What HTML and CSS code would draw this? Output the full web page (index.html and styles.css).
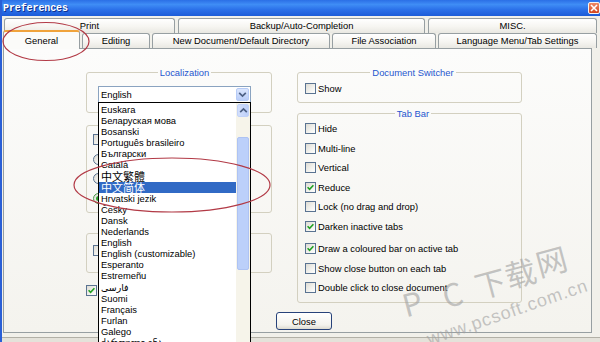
FILE: index.html
```html
<!DOCTYPE html>
<html>
<head>
<meta charset="utf-8">
<title>Preferences</title>
<link rel="stylesheet" href="styles.css">
</head>
<body>
<div class="window">
  <div class="titlebar">
    <span class="title">Preferences</span>
    <span class="close-btn"><svg width="8" height="8" viewBox="0 0 8 8"><path d="M1 1L7 7M7 1L1 7" stroke="#fff" stroke-width="1.6" fill="none"/></svg></span>
  </div>

  <div class="tabs">
    <div class="tab-row back">
      <div class="tab w-print">Print</div>
      <div class="tab w-backup">Backup/Auto-Completion</div>
      <div class="tab w-misc">MISC.</div>
    </div>
    <div class="tab-row front">
      <div class="tab active w-general">General</div>
      <div class="tab w-editing">Editing</div>
      <div class="tab w-newdoc">New Document/Default Directory</div>
      <div class="tab w-file">File Association</div>
      <div class="tab w-lang">Language Menu/Tab Settings</div>
    </div>
  </div>

  <div class="page">
    <div class="content">
      <div class="columns">
        <div class="col col-left">
          <fieldset class="group g-local">
            <legend>Localization</legend>
            <div class="combo">
              <span class="combo-value">English</span>
              <span class="combo-btn"><svg width="9" height="7" viewBox="0 0 9 7"><path d="M1.2 1.8L4.5 5L7.8 1.8" stroke="#4d6185" stroke-width="1.7" fill="none"/></svg></span>
              <div class="dropdown">
                <div class="list">
                  <div class="item">Euskara</div>
                  <div class="item">Беларуская мова</div>
                  <div class="item">Bosanski</div>
                  <div class="item">Português brasileiro</div>
                  <div class="item">Български</div>
                  <div class="item">Català</div>
                  <div class="item cjk">中文繁體</div>
                  <div class="item cjk selected">中文简体</div>
                  <div class="item">Hrvatski jezik</div>
                  <div class="item">Česky</div>
                  <div class="item">Dansk</div>
                  <div class="item">Nederlands</div>
                  <div class="item">English</div>
                  <div class="item">English (customizable)</div>
                  <div class="item">Esperanto</div>
                  <div class="item">Estremeñu</div>
                  <div class="item">فارسی</div>
                  <div class="item">Suomi</div>
                  <div class="item">Français</div>
                  <div class="item">Furlan</div>
                  <div class="item">Galego</div>
                  <div class="item">ქართული ენა</div>
                </div>
                <div class="scrollbar">
                  <div class="sb-btn"><svg width="9" height="7" viewBox="0 0 9 7"><path d="M1.2 5.2L4.5 2L7.8 5.2" stroke="#4d6185" stroke-width="1.7" fill="none"/></svg></div>
                  <div class="sb-thumb"></div>
                </div>
              </div>
            </div>
          </fieldset>

          <div class="group g-opts">
            <div class="opt"><span class="cb"></span></div>
            <div class="opt"><span class="rb"></span></div>
            <div class="opt"><span class="rb"></span></div>
            <div class="opt"><span class="rb on"><span class="dot"></span></span></div>
          </div>

          <div class="group g-opts2">
            <div class="opt"><span class="cb"></span></div>
          </div>

          <div class="opt single">
            <span class="cb"><svg width="9" height="9" viewBox="0 0 9 9"><path d="M1.6 4.3L3.6 6.3L7.4 2.3" stroke="#21a121" stroke-width="1.6" fill="none"/></svg></span>
          </div>
        </div>

        <div class="col col-right">
          <fieldset class="group g-doc">
            <legend>Document Switcher</legend>
            <div class="opt"><span class="cb"></span><span>Show</span></div>
          </fieldset>

          <fieldset class="group g-tab">
            <legend>Tab Bar</legend>
            <div class="opt"><span class="cb"></span><span>Hide</span></div>
            <div class="opt"><span class="cb"></span><span>Multi-line</span></div>
            <div class="opt"><span class="cb"></span><span>Vertical</span></div>
            <div class="opt"><span class="cb"><svg width="9" height="9" viewBox="0 0 9 9"><path d="M1.6 4.3L3.6 6.3L7.4 2.3" stroke="#21a121" stroke-width="1.6" fill="none"/></svg></span><span>Reduce</span></div>
            <div class="opt"><span class="cb"></span><span>Lock (no drag and drop)</span></div>
            <div class="opt"><span class="cb"><svg width="9" height="9" viewBox="0 0 9 9"><path d="M1.6 4.3L3.6 6.3L7.4 2.3" stroke="#21a121" stroke-width="1.6" fill="none"/></svg></span><span>Darken inactive tabs</span></div>
            <div class="opt spaced"><span class="cb"><svg width="9" height="9" viewBox="0 0 9 9"><path d="M1.6 4.3L3.6 6.3L7.4 2.3" stroke="#21a121" stroke-width="1.6" fill="none"/></svg></span><span>Draw a coloured bar on active tab</span></div>
            <div class="opt"><span class="cb"></span><span>Show close button on each tab</span></div>
            <div class="opt"><span class="cb"></span><span>Double click to close document</span></div>
          </fieldset>
        </div>
      </div>
      <div class="actions"><button class="btn">Close</button></div>
    </div>
  </div>
  <div class="win-bottom"></div>

  <svg class="overlay" width="600" height="342" viewBox="0 0 600 342">
    <g class="wm-cn">
      <text x="412" y="302" transform="rotate(-15 412 302)">P</text>
      <text x="452" y="293" transform="rotate(-15 452 293)">C</text>
      <text x="490" y="282" transform="rotate(-15 490 282)">下</text>
      <text x="520" y="272" transform="rotate(-15 520 272)">载</text>
      <text x="551" y="260" transform="rotate(-15 551 260)">网</text>
    </g>
    <text class="wm-url" x="509" y="318" textLength="168" transform="rotate(-19 509 318)">www.pcsoft.com.cn</text>
    <ellipse cx="46" cy="41.5" rx="43" ry="19" class="ring"/>
    <ellipse cx="172" cy="185" rx="98" ry="27" class="ring"/>
  </svg>
</div>
</body>
</html>
```

FILE: styles.css
```css
* { box-sizing: border-box; }

html, body {
  margin: 0;
  padding: 0;
}

body {
  width: 600px;
  height: 342px;
  overflow: hidden;
  font-family: "Liberation Sans", "DejaVu Sans", "Noto Sans CJK SC", sans-serif;
  font-size: 9.4px;
  color: #000;
  background: #f1f0ea;
}

.window {
  position: relative;
  width: 600px;
  height: 342px;
  overflow: hidden;
  border-left: 2px solid #2a5fd6;
  background: #f1f0ea;
  display: flex;
  flex-direction: column;
}

/* title bar */
.titlebar {
  flex: none;
  height: 16px;
  display: flex;
  align-items: center;
  justify-content: space-between;
  padding: 0 0 0 1px;
  background: linear-gradient(#2b6fe6 0%, #3f8df5 28%, #2a6fe8 62%, #1c5cd8 100%);
}

.title {
  font-family: "Liberation Mono", "DejaVu Sans Mono", monospace;
  font-weight: bold;
  font-size: 10px;
  letter-spacing: -0.1px;
  color: #fff;
  text-shadow: 1px 1px 0 #0d2f8c;
}

.close-btn {
  width: 12px;
  height: 12px;
  border: 1px solid #f4f4f4;
  border-radius: 2px;
  background: linear-gradient(#ec8a66, #d4461f);
  display: flex;
  align-items: center;
  justify-content: center;
}

/* tabs */
.tabs {
  flex: none;
  padding-top: 2px;
}

.tab-row {
  display: flex;
  height: 15px;
}

.tab-row.back {
  padding-left: 2px;
  gap: 3px;
}

.tab-row.front {
  padding-left: 1px;
  gap: 2px;
  align-items: flex-end;
}

.tab {
  flex: none;
  height: 15px;
  border: 1px solid #979fa2;
  border-bottom: none;
  border-radius: 3px 3px 0 0;
  background: linear-gradient(#ffffff, #f6f5f1 55%, #e9e8e2);
  display: flex;
  align-items: center;
  justify-content: center;
  white-space: nowrap;
  line-height: 1;
}

.tab.active {
  height: 19px;
  margin-bottom: -1px;
  position: relative;
  z-index: 2;
  border-top: 2px solid #f0a33c;
  background: #fbfbf9;
}

.w-print { width: 171px; }
.w-backup { width: 247px; }
.w-misc { width: 169px; }
.w-general { width: 77px; }
.w-editing { width: 68px; }
.w-newdoc { width: 178px; }
.w-file { width: 104px; }
.w-lang { width: 159px; }

/* tab page */
.page {
  flex: none;
  margin-left: 1px;
  width: 589px;
  border: 1px solid #979fa2;
  background: linear-gradient(#fcfcfb, #f4f3ee);
  padding: 18px 0 2px 82px;
  display: flex;
  align-items: flex-start;
}

.content {
  display: flex;
  flex-direction: column;
  align-items: center;
}

.columns {
  display: flex;
  gap: 25px;
  align-items: flex-start;
}

.col {
  display: flex;
  flex-direction: column;
}

.col-left { width: 186px; }
.col-right { width: 225px; }

.group {
  margin: 0;
  min-width: 0;
  border: 1px solid #d3d0c0;
  border-radius: 3px;
}

fieldset.group legend {
  margin: 0 auto;
  padding: 0 2px;
  line-height: 11px;
  color: #2657cf;
}

.g-local {
  padding: 8px 0 9px 11px;
}

.g-opts {
  margin-top: 12px;
  padding: 4px 6px 4px 6px;
}

.g-opts2 {
  margin-top: 20px;
  padding: 7px 6px 11.5px 6px;
}

.opt {
  height: 19.5px;
  display: flex;
  align-items: center;
  gap: 2px;
  white-space: nowrap;
}

.opt.single {
  margin-top: 8px;
}

.opt.spaced {
  margin-top: 2.75px;
}

.g-doc {
  padding: 1px 0 3px 7px;
}

.g-tab {
  margin-top: 5.5px;
  padding: 0 0 5px 7px;
}

.cb {
  flex: none;
  width: 11px;
  height: 11px;
  border: 1px solid #5a7391;
  background: linear-gradient(135deg, #dedcd4, #f6f6f3 70%, #ffffff);
  display: flex;
  align-items: center;
  justify-content: center;
}

.rb {
  flex: none;
  width: 11px;
  height: 11px;
  border-radius: 50%;
  border: 1px solid #5a7391;
  background: linear-gradient(135deg, #dedcd4, #ffffff);
  display: flex;
  align-items: center;
  justify-content: center;
}

.rb.on {
  border-color: #4c9a4c;
}

.dot {
  width: 5px;
  height: 5px;
  border-radius: 50%;
  background: #2ea32e;
}

/* combo + dropdown */
.combo {
  position: relative;
  width: 153px;
  height: 17px;
  border: 1px solid #8aa3c0;
  background: #fff;
  display: flex;
  align-items: center;
  justify-content: space-between;
  padding: 0 1px 0 2px;
}

.combo-btn {
  width: 13px;
  height: 13px;
  border: 1px solid #b6cbf6;
  border-radius: 2px;
  background: linear-gradient(#dbe6fd, #b9cdf8);
  display: flex;
  align-items: center;
  justify-content: center;
}

.dropdown {
  position: absolute;
  left: -1px;
  top: 15px;
  width: 153px;
  height: 262px;
  border: 1px solid #000;
  background: #fff;
  display: flex;
  z-index: 5;
}

.list {
  flex: 1;
  min-width: 0;
  padding-top: 1px;
}

.item {
  height: 11.1px;
  line-height: 11.1px;
  padding-left: 2px;
  white-space: nowrap;
}

.item.cjk {
  font-family: "Noto Sans CJK SC", "Noto Sans CJK TC", sans-serif;
  font-size: 11px;
}

.item.selected {
  background: #316ac5;
  color: #fff;
}

.scrollbar {
  flex: none;
  width: 14px;
  background: #f6f4ea;
  padding: 1px 1px 0 1px;
  display: flex;
  flex-direction: column;
}

.sb-btn {
  height: 13px;
  border: 1px solid #c2d2f8;
  border-radius: 2px;
  background: linear-gradient(90deg, #d3dffc, #bccff9);
  display: flex;
  align-items: center;
  justify-content: center;
}

.sb-thumb {
  margin-top: 20px;
  height: 133px;
  border: 1px solid #aec3f3;
  border-radius: 2px;
  background: #bcd0fa;
}

/* button */
.actions {
  margin-top: 9px;
  display: flex;
  justify-content: center;
}

.btn {
  width: 56px;
  height: 18px;
  padding: 0;
  font: inherit;
  color: #000;
  border: 1px solid #27427a;
  border-radius: 3px;
  background: linear-gradient(#ffffff, #f3f2ed 75%, #dcdad0);
}

.win-bottom {
  flex: 1;
  margin-top: 4px;
  border-top: 1px solid #b2b0a6;
  background: #e4e2da;
}

/* annotations / watermark overlay */
.overlay {
  position: absolute;
  left: -2px;
  top: 0;
  z-index: 10;
  pointer-events: none;
}

.ring {
  fill: none;
  stroke: #b23a46;
  stroke-width: 1.2;
}

.wm-cn text {
  font-family: "Noto Sans CJK SC", sans-serif;
  font-size: 31px;
  fill: #a0a0a0;
  fill-opacity: 0.6;
  text-anchor: middle;
  dominant-baseline: central;
}

.wm-url {
  font-family: "Liberation Sans", sans-serif;
  font-size: 18px;
  fill: #a0a0a0;
  fill-opacity: 0.6;
  text-anchor: middle;
}
```
